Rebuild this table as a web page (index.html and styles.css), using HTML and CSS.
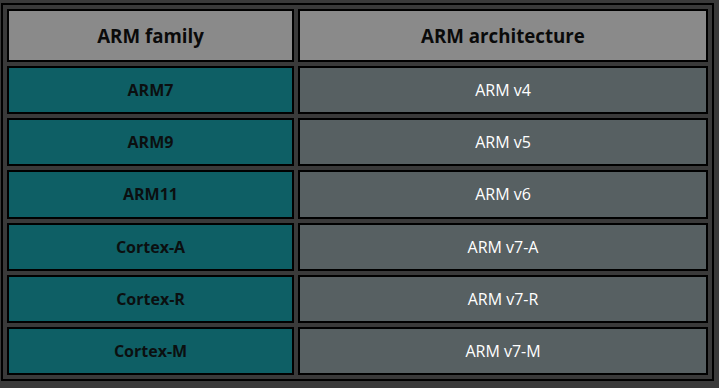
FILE: index.html
```html
<!DOCTYPE html>
<html>
<head>
<meta charset="utf-8">
<link rel="stylesheet" href="styles.css">
</head>
<body>
<table class="arm">
  <thead>
    <tr><th class="col-family">ARM family</th><th class="col-arch">ARM architecture</th></tr>
  </thead>
  <tbody>
    <tr><td class="family">ARM7</td><td class="arch">ARM v4</td></tr>
    <tr><td class="family">ARM9</td><td class="arch">ARM v5</td></tr>
    <tr><td class="family">ARM11</td><td class="arch">ARM v6</td></tr>
    <tr><td class="family">Cortex-A</td><td class="arch">ARM v7-A</td></tr>
    <tr><td class="family">Cortex-R</td><td class="arch">ARM v7-R</td></tr>
    <tr><td class="family">Cortex-M</td><td class="arch">ARM v7-M</td></tr>
  </tbody>
</table>
</body>
</html>
```
FILE: styles.css
```css
html, body {
  margin: 0;
  padding: 0;
  background: #3a3a3a;
  font-family: "Open Sans", "Liberation Sans", sans-serif;
}
.arm {
  margin: 3px 0 0 1px;
  width: 713px;
  border: 2px solid #000;
  border-collapse: separate;
  border-spacing: 4px;
  table-layout: fixed;
}
.arm th, .arm td {
  border: 2px solid #000;
  text-align: center;
  padding: 0;
  box-sizing: border-box;
}
.arm th {
  background: #8a8a8a;
  color: #0a0a0a;
  font-size: 18.7px;
  font-weight: 700;
  height: 53px;
}
.col-family { width: 287px; }
.arm td {
  height: 48.2px;
  font-size: 16px;
}
.family {
  background: #0e5f65;
  color: #0b0f10;
  font-weight: 700;
}
.arch {
  background: #576062;
  color: #ffffff;
}
```
